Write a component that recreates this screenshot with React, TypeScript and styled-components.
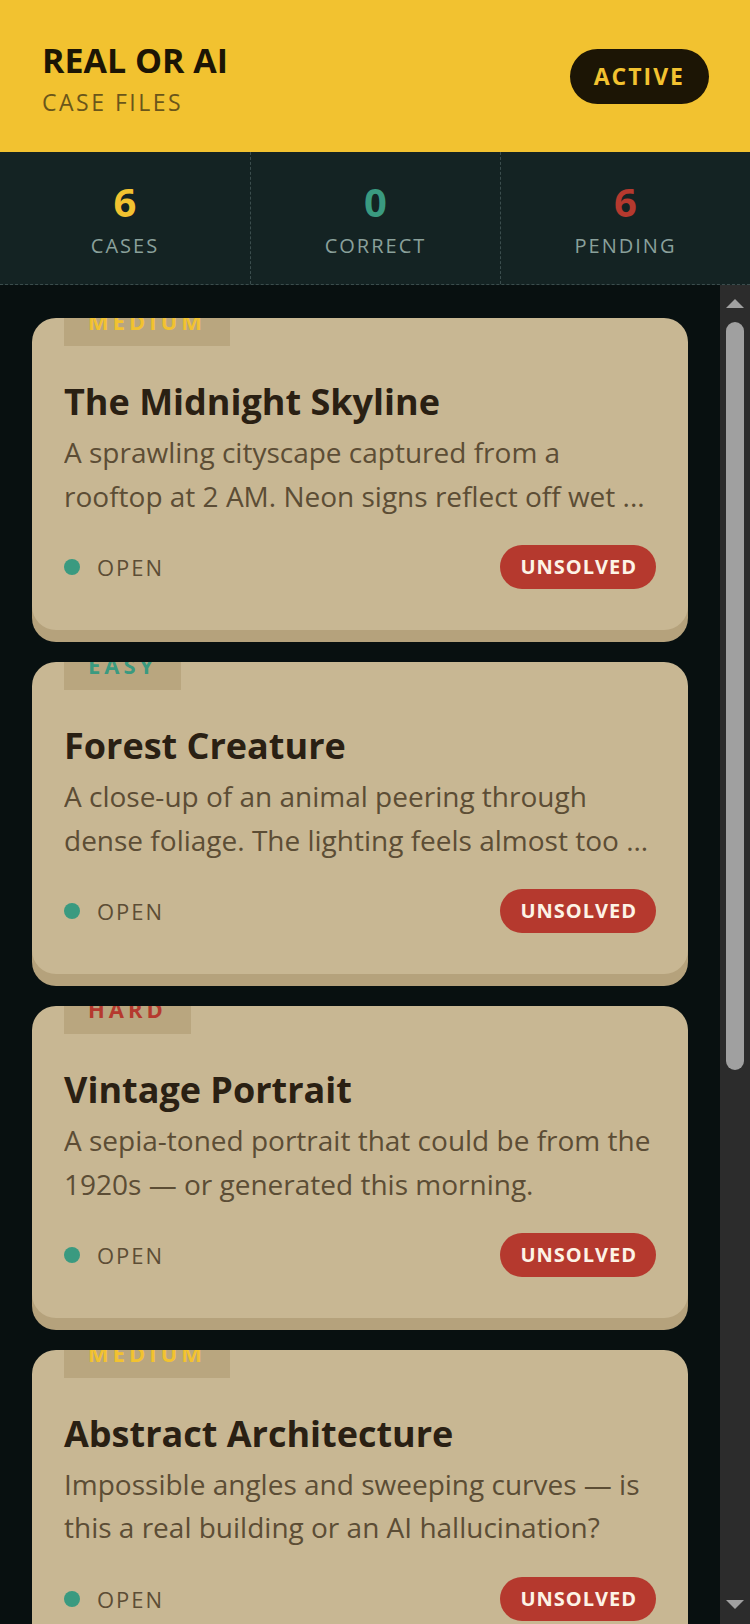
import * as React from 'react';
import styled, { createGlobalStyle } from 'styled-components';

const YELLOW = '#F2C230';
const TEAL = '#3A9A80';
const RED = '#B5392E';
const RAIL = '#2c2c2c';
const RAIL_FG = '#a0a0a0';

const GlobalStyle = createGlobalStyle`
  html, body {
    margin: 0;
    padding: 0;
    height: 100%;
    background: #081010;
  }
  #root {
    height: 100%;
  }
  * {
    box-sizing: border-box;
  }
`;

const Screen = styled.div`
  height: 100vh;
  display: flex;
  flex-direction: column;
  font-family: 'Open Sans', 'Liberation Sans', sans-serif;
  background: #081010;
`;

const Header = styled.header`
  height: 152px;
  flex-shrink: 0;
  display: flex;
  align-items: center;
  justify-content: space-between;
  padding: 0 41px 0 42px;
  background: ${YELLOW};
`;

const Brand = styled.div`
  display: flex;
  flex-direction: column;
  margin-top: 4px;
`;

const Title = styled.h1`
  margin: 0;
  font-size: 34px;
  line-height: 1.2;
  font-weight: 700;
  color: #1c1505;
`;

const Subtitle = styled.div`
  margin-top: 8px;
  font-size: 23px;
  line-height: 1.2;
  letter-spacing: 2.5px;
  color: #6a561a;
`;

const StatusPill = styled.div`
  height: 55px;
  display: flex;
  align-items: center;
  padding: 0 24px;
  border-radius: 28px;
  background: #1c1505;
  color: ${YELLOW};
  font-size: 23px;
  font-weight: 700;
  letter-spacing: 2px;
`;

const StatsBar = styled.div`
  flex-shrink: 0;
  display: grid;
  grid-template-columns: repeat(3, 1fr);
  background: #142323;
  border-bottom: 1px dashed #3b4d4d;
`;

const Stat = styled.div`
  display: flex;
  flex-direction: column;
  align-items: center;
  padding: 26px 0;
  & + & {
    border-left: 1px dashed #3b4d4d;
  }
`;

const StatValue = styled.div<{ $color: string }>`
  font-size: 40px;
  line-height: 1.2;
  font-weight: 700;
  color: ${(p) => p.$color};
`;

const StatLabel = styled.div`
  margin-top: 8px;
  font-size: 20px;
  line-height: 1.2;
  letter-spacing: 2px;
  color: #8aa09b;
`;

const Body = styled.div`
  flex: 1;
  min-height: 0;
  display: flex;
`;

const CaseList = styled.main`
  flex: 1;
  min-width: 0;
  overflow-y: auto;
  scrollbar-width: none;
  display: flex;
  flex-direction: column;
  gap: 32px;
  padding: 33px 32px 186px;
`;

const ScrollRail = styled.div`
  width: 30px;
  flex-shrink: 0;
  display: flex;
  flex-direction: column;
  background: ${RAIL};
`;

const RailButton = styled.div<{ $pad: string }>`
  height: 30px;
  flex-shrink: 0;
  display: flex;
  justify-content: center;
  padding-top: ${(p) => p.$pad};
  color: ${RAIL_FG};
`;

const RailTrack = styled.div`
  flex: 1;
  padding: 7px 6px 0;
`;

const RailThumb = styled.div`
  height: 748px;
  border-radius: 9px;
  background: ${RAIL_FG};
`;

const Card = styled.article`
  position: relative;
  flex-shrink: 0;
  overflow: hidden;
  padding: 62px 32px 41px;
  border-radius: 24px;
  background: #c8b793;
  box-shadow: 0 12px 0 #b5a27c;
`;

const DifficultyTag = styled.div<{ $color: string }>`
  position: absolute;
  top: -14px;
  left: 32px;
  padding: 6px 24px 14px;
  background: #b9a67f;
  font-size: 22px;
  line-height: 22px;
  font-weight: 700;
  letter-spacing: 4px;
  color: ${(p) => p.$color};
`;

const CaseTitle = styled.h2`
  margin: 0;
  font-size: 36px;
  line-height: 1.2;
  font-weight: 700;
  color: #2a2013;
`;

const CaseText = styled.p`
  margin: 8px 0 0;
  font-size: 28px;
  line-height: 1.55;
  color: #5c4d35;
  display: -webkit-box;
  -webkit-line-clamp: 2;
  -webkit-box-orient: vertical;
  overflow: hidden;
`;

const CardFooter = styled.div`
  margin-top: 27px;
  display: flex;
  align-items: center;
  justify-content: space-between;
`;

const OpenState = styled.div`
  display: flex;
  align-items: center;
  gap: 17px;
  font-size: 22px;
  letter-spacing: 2px;
  color: #5c4d35;
`;

const Dot = styled.span`
  width: 16px;
  height: 16px;
  border-radius: 50%;
  background: ${TEAL};
`;

const VerdictPill = styled.div`
  height: 44px;
  display: flex;
  align-items: center;
  padding: 0 19px 0 20px;
  border-radius: 22px;
  background: ${RED};
  color: #fdf3e6;
  font-size: 20px;
  font-weight: 700;
  letter-spacing: 1px;
`;

type Difficulty = 'EASY' | 'MEDIUM' | 'HARD';

const difficultyColor: Record<Difficulty, string> = {
  EASY: TEAL,
  MEDIUM: YELLOW,
  HARD: RED,
};

const cases: { title: string; text: string; difficulty: Difficulty }[] = [
  {
    title: 'The Midnight Skyline',
    text: 'A sprawling cityscape captured from a rooftop at 2 AM. Neon signs reflect off wet ...',
    difficulty: 'MEDIUM',
  },
  {
    title: 'Forest Creature',
    text: 'A close-up of an animal peering through dense foliage. The lighting feels almost too ...',
    difficulty: 'EASY',
  },
  {
    title: 'Vintage Portrait',
    text: 'A sepia-toned portrait that could be from the 1920s — or generated this morning.',
    difficulty: 'HARD',
  },
  {
    title: 'Abstract Architecture',
    text: 'Impossible angles and sweeping curves — is this a real building or an AI hallucination?',
    difficulty: 'MEDIUM',
  },
  {
    title: 'Market Morning',
    text: 'Crowded stalls, hand-painted signs and a vendor mid-laugh. Count the fingers twice.',
    difficulty: 'EASY',
  },
  {
    title: 'Ocean at Dusk',
    text: 'Waves catch the last light of the day. The horizon is calm — maybe a little too calm.',
    difficulty: 'HARD',
  },
];

function Arrow({ up }: { up?: boolean }) {
  return (
    <svg width="18" height="9" viewBox="0 0 18 9">
      <path d={up ? 'M9 0 L18 9 L0 9 Z' : 'M0 0 L18 0 L9 9 Z'} fill="currentColor" />
    </svg>
  );
}

export default function App() {
  return (
    <>
      <GlobalStyle />
      <Screen>
        <Header>
          <Brand>
            <Title>REAL OR AI</Title>
            <Subtitle>CASE FILES</Subtitle>
          </Brand>
          <StatusPill>ACTIVE</StatusPill>
        </Header>
        <StatsBar>
          <Stat>
            <StatValue $color={YELLOW}>6</StatValue>
            <StatLabel>CASES</StatLabel>
          </Stat>
          <Stat>
            <StatValue $color={TEAL}>0</StatValue>
            <StatLabel>CORRECT</StatLabel>
          </Stat>
          <Stat>
            <StatValue $color={RED}>6</StatValue>
            <StatLabel>PENDING</StatLabel>
          </Stat>
        </StatsBar>
        <Body>
          <CaseList>
            {cases.map((c) => (
              <Card key={c.title}>
                <DifficultyTag $color={difficultyColor[c.difficulty]}>
                  {c.difficulty}
                </DifficultyTag>
                <CaseTitle>{c.title}</CaseTitle>
                <CaseText>{c.text}</CaseText>
                <CardFooter>
                  <OpenState>
                    <Dot />
                    OPEN
                  </OpenState>
                  <VerdictPill>UNSOLVED</VerdictPill>
                </CardFooter>
              </Card>
            ))}
          </CaseList>
          <ScrollRail>
            <RailButton $pad="14px">
              <Arrow up />
            </RailButton>
            <RailTrack>
              <RailThumb />
            </RailTrack>
            <RailButton $pad="6px">
              <Arrow />
            </RailButton>
          </ScrollRail>
        </Body>
      </Screen>
    </>
  );
}
